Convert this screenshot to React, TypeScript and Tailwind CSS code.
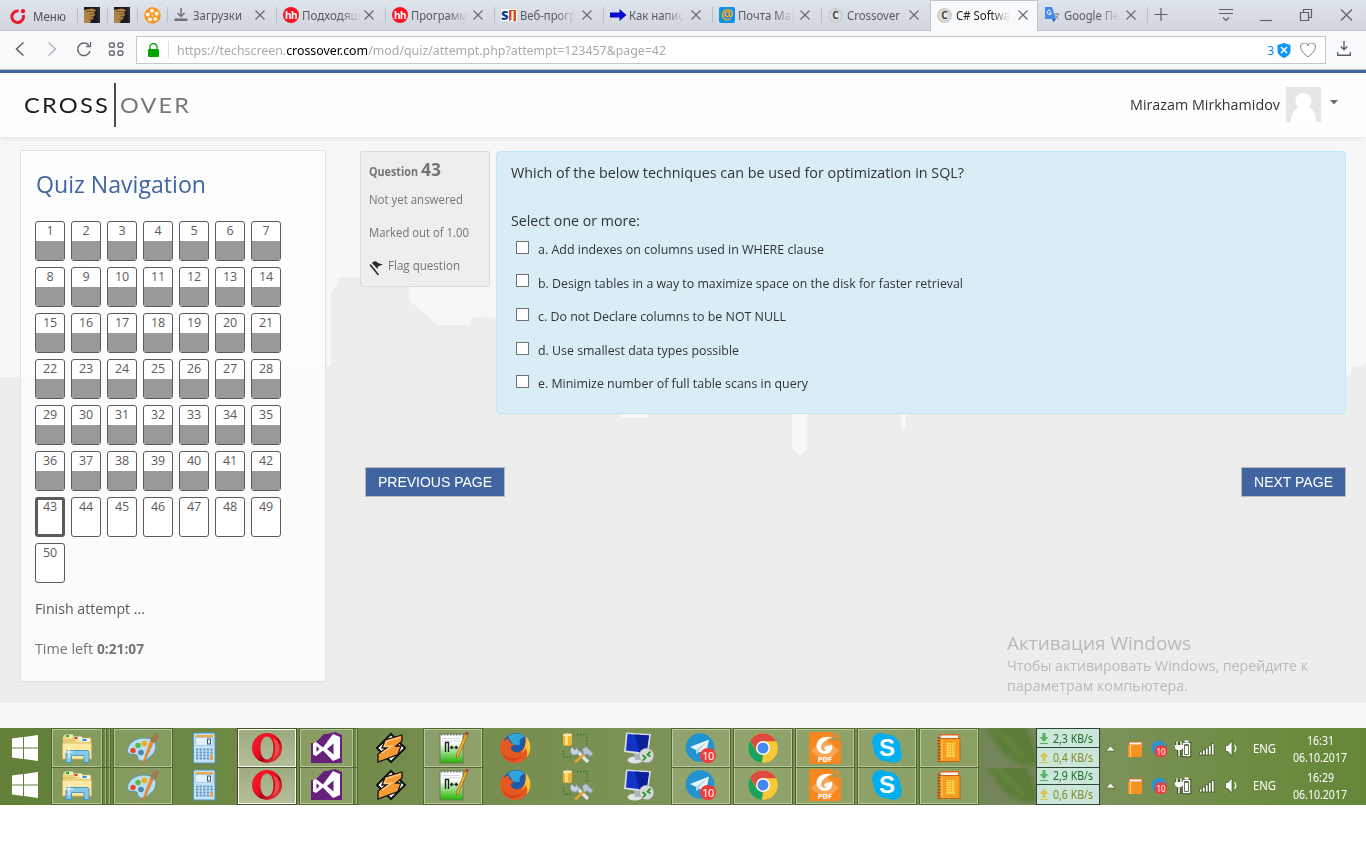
import { useLayoutEffect, useRef } from 'react';
import type { ReactNode } from 'react';

/* Text condensed or widened to fill the width given by its class. */
function Fit({ children, className = '' }: { children: ReactNode; className?: string }) {
  const outer = useRef<HTMLSpanElement>(null);
  const inner = useRef<HTMLSpanElement>(null);
  useLayoutEffect(() => {
    const o = outer.current;
    const i = inner.current;
    if (!o || !i) return;
    i.style.transform = 'none';
    const ratio = o.getBoundingClientRect().width / i.getBoundingClientRect().width;
    i.style.transform = `scaleX(${ratio})`;
  });
  return (
    <span ref={outer} className={`inline-block shrink-0 whitespace-nowrap text-left align-top ${className}`}>
      <span ref={inner} className="inline-block origin-left align-top">{children}</span>
    </span>
  );
}

/* ---------- browser chrome ---------- */

const CloseX = () => (
  <svg width="10" height="10" viewBox="0 0 10 10" className="shrink-0">
    <path d="M.5 .5 9.5 9.5M9.5 .5 .5 9.5" stroke="#63666b" strokeWidth="1.1" />
  </svg>
);

const HeadTile = () => (
  <svg width="16" height="16" viewBox="0 0 16 16">
    <rect width="16" height="16" fill="#1b1a1e" />
    <path d="M0 3 8 1.500 12 3 10 6l1.500 1.500L9 10l.5 2L7 13l-1 3H0z" fill="#b08347" />
    <path d="M2 4.500h9M5 7h6M6 9.500h4M5 12h4" stroke="#6f4b25" strokeWidth=".8" />
    <path d="M13 0h3v16h-2z" fill="#2b2a30" />
  </svg>
);

const Reel = () => (
  <svg width="17" height="17" viewBox="0 0 17 17">
    <circle cx="8.500" cy="8.500" r="8.200" fill="#f7931e" />
    <g fill="#fff3e0">
      <circle cx="8" cy="3.800" r="2.100" />
      <circle cx="3.900" cy="7.500" r="2.100" />
      <circle cx="12.700" cy="6.600" r="2.100" />
      <circle cx="6" cy="12.500" r="2.100" />
      <circle cx="11.300" cy="12" r="2.100" />
      <circle cx="8.500" cy="8.500" r=".9" />
    </g>
  </svg>
);

const Hh = () => (
  <span className="flex h-4 w-4 items-center justify-center rounded-full bg-[#f9141e] font-['Open_Sans',sans-serif] text-[10px] leading-none font-bold tracking-[-0.5px] text-white">
    hh
  </span>
);

const DownloadTray = () => (
  <svg width="14" height="14" viewBox="0 0 14 14">
    <path d="M7 0v8M3.500 5 7 8.500 10.500 5" fill="none" stroke="#6f7277" strokeWidth="1.500" />
    <rect x=".5" y="10.500" width="13" height="2.500" rx=".6" fill="#6f7277" />
  </svg>
);

const Sj = () => (
  <span className="flex h-[12px] w-4 items-center bg-white font-['Open_Sans',sans-serif] text-[13px] leading-none font-extrabold">
    <span className="w-2 text-[#123f8c]">S</span>
    <span className="flex h-[11px] w-[7px] items-center justify-center bg-[#e5481b] text-[10px] text-white">J</span>
  </span>
);

const BlueArrow = () => (
  <svg width="17" height="12" viewBox="0 0 17 12">
    <path d="M0 3.500h9.500V0L16.500 6 9.500 12V8.500H0z" fill="#0a0ad0" />
  </svg>
);

const MailAt = () => (
  <span className="flex h-4 w-4 items-center justify-center rounded-[2px] bg-[#0a93e8] pb-[2px] font-['Open_Sans',sans-serif] text-[14px] leading-none font-bold text-[#f5a623]">
    @
  </span>
);

const CBall = () => (
  <span className="flex h-[15px] w-[15px] items-center justify-center rounded-full bg-radial from-[#f4f4f4] to-[#b9b9b9] font-['Open_Sans',sans-serif] text-[10px] leading-none font-bold text-[#3c3c3c]">
    C
  </span>
);

const Translate = () => (
  <svg width="16" height="16" viewBox="0 0 16 16" className="-ml-px">
    <rect x="7" y="4" width="9" height="11" fill="#dcdee2" />
    <path d="M1 0h7l4 12H2a1 1 0 0 1-1-1z" fill="#4a87ee" />
    <path d="M8 12h4l-2.500 3.500z" fill="#2f5fc4" />
    <path d="M7 4.300A2.100 2.100 0 1 0 7.300 6H5.300" fill="none" stroke="#fff" strokeWidth="1" />
    <path d="M10.500 7h5M13 6v1.500M14.500 7c-.5 2-1.500 3.500-3.500 5M11.500 8.500c.8 1.800 2 3 3.500 4" fill="none" stroke="#7a8088" strokeWidth=".9" />
  </svg>
);

type TabInfo = { icon: ReactNode; label: string; width: string; fade?: boolean; active?: boolean };

const tabs: TabInfo[] = [
  { icon: <DownloadTray />, label: 'Загрузки', width: 'w-[49px]' },
  { icon: <Hh />, label: 'Подходящ', width: 'w-[59px]', fade: true },
  { icon: <Hh />, label: 'Программ', width: 'w-[57px]', fade: true },
  { icon: <Sj />, label: 'Веб-прогр', width: 'w-[56px]', fade: true },
  { icon: <BlueArrow />, label: 'Как напис', width: 'w-[55px]', fade: true },
  { icon: <MailAt />, label: 'Почта Mai', width: 'w-[56px]', fade: true },
  { icon: <CBall />, label: 'Crossover', width: 'w-[53px]' },
  { icon: <CBall />, label: 'C# Softwa', width: 'w-[54px]', fade: true, active: true },
  { icon: <Translate />, label: 'Google Пе', width: 'w-[55px]', fade: true },
];

function Tab({ t, quiet }: { t: TabInfo; quiet: boolean }) {
  return (
    <div
      className={`relative flex shrink-0 items-center ${
        t.active
          ? 'h-[31px] w-[108px] self-start border-x border-t border-[#c2c5ca] bg-[#f8f9fb] pb-[2px] pl-[6px] text-[#222]'
          : 'h-[30px] w-[109px] pl-[7px] text-[#57595d]'
      }`}
    >
      {!t.active && !quiet && <span className="absolute top-[7px] left-0 h-4 w-px bg-[#bcc0c6]" />}
      <span className="flex w-[18px] shrink-0 items-center justify-start">{t.icon}</span>
      <span className="w-[63px] shrink-0 overflow-hidden pt-px pl-[1px] text-[12px] leading-4">
        <Fit className={`${t.width} ${t.fade ? '[mask-image:linear-gradient(90deg,#000_65%,transparent)]' : ''}`}>{t.label}</Fit>
      </span>
      <CloseX />
    </div>
  );
}

function TabBar() {
  return (
    <div className="flex h-[31px] items-start border-b border-[#c2c5ca] bg-linear-to-b from-[#dfe5ed] to-[#d1d6de]">
      <div className="flex h-[31px] w-[77px] shrink-0 items-center pt-px pl-[10px]">
        <svg width="16" height="17" viewBox="0 0 16 17">
          <path d="M8.500 3A5.800 5.800 0 1 0 13.200 7" fill="none" stroke="#e81c2f" strokeWidth="3" />
          <circle cx="13" cy="3.200" r="2.100" fill="#f0142a" />
        </svg>
        <Fit className="ml-[7px] w-[33px] text-[13px] leading-4 text-[#4b4f55]">Меню</Fit>
      </div>
      {[<HeadTile />, <HeadTile />, <Reel />].map((icon, i) => (
        <div key={i} className="relative flex h-[30px] w-[30px] shrink-0 items-center justify-center">
          <span className="absolute top-[7px] left-0 h-4 w-px bg-[#bcc0c6]" />
          {icon}
        </div>
      ))}
      {tabs.map((t, i) => (
        <Tab key={i} t={t} quiet={i === 8} />
      ))}
      <div className="relative flex h-[30px] flex-1 items-center">
        <span className="absolute top-[7px] left-0 h-4 w-px bg-[#bcc0c6]" />
        <svg width="219" height="30" viewBox="1 0 219 30" fill="none" stroke="#5d6065" strokeWidth="1.200" className="shrink-0">
          <path d="M8.500 14.500h13M15 8v13" />
          <path d="M73 9.500h14M73 13.500h14M77 17.500l3 3 3-3" />
          <path d="M114 20.500h12" />
          <path d="M157.500 12.500v-3h8v8h-3M154.500 12.500h8v8h-8z" />
          <path d="M195 9.500l11 11M206 9.500l-11 11" />
        </svg>
      </div>
    </div>
  );
}

function AddressBar() {
  return (
    <div className="flex h-[39px] items-center border-b border-[#c6c8cb] bg-[#f8f9fb]">
      <svg width="136" height="38" viewBox="0 0 136 38" fill="none" className="shrink-0">
        <path d="M23.500 11.500 16.500 18l7 6.500" stroke="#5e6063" strokeWidth="1.500" />
        <path d="M48.500 11.500l7 6.500-7 6.500" stroke="#b4b6b9" strokeWidth="1.500" />
        <path d="M89 14.500A6.300 6.300 0 1 0 90 20" stroke="#67696c" strokeWidth="1.500" />
        <path d="M90.500 11v4.500H86" stroke="#67696c" strokeWidth="1.300" />
        <g stroke="#67696c" strokeWidth="1.400">
          <rect x="109.500" y="12" width="4.800" height="4.300" rx="1.200" />
          <rect x="118" y="12" width="4.800" height="4.300" rx="1.200" />
          <rect x="109.500" y="20" width="4.800" height="4.300" rx="1.200" />
          <rect x="118" y="20" width="4.800" height="4.300" rx="1.200" />
        </g>
      </svg>
      <div className="flex h-[28px] w-[1190px] shrink-0 items-center border border-[#c4c7cb] bg-white">
        <svg width="11" height="14" viewBox="0 0 11 14" className="ml-[11px] shrink-0">
          <path d="M2 7V4a3.500 3.500 0 0 1 7 0v3" fill="none" stroke="#00a200" strokeWidth="1.300" />
          <rect y="6" width="11" height="8" rx="1" fill="#00a200" />
        </svg>
        <span className="ml-[9px] h-[18px] w-px bg-[#dedfe1]" />
        <Fit className="mt-px ml-[8px] w-[489px] text-[12.500px] leading-5 text-[#a9a9a9]">
          https://techscreen.<span className="text-black">crossover.com</span>/mod/quiz/attempt.php?attempt=123457&amp;page=42
        </Fit>
        <div className="ml-auto flex items-center pr-[9px]">
          <span className="pt-px text-[12px] leading-4 text-[#0b8cf0]">3</span>
          <svg width="14" height="15" viewBox="0 0 14 15" className="ml-[3px]">
            <path d="M7 0l6.500 2v6c0 3-3 5.500-6.500 7C3.500 13.500 .5 11 .5 8V2z" fill="#0f97f7" />
            <path d="M4 4l6 6M10 4l-6 6" stroke="#fff" strokeWidth="1.600" />
          </svg>
          <svg width="16" height="15" viewBox="0 0 16 15" className="ml-[9px]">
            <path d="M8 14C3.500 10 .7 7.500 .7 4.500A3.700 3.700 0 0 1 8 3a3.700 3.700 0 0 1 7.300 1.500C15.300 7.500 12.500 10 8 14z" fill="none" stroke="#77797c" strokeWidth="1" />
          </svg>
        </div>
      </div>
      <svg width="14" height="16" viewBox="0 0 14 16" fill="none" stroke="#5d6065" strokeWidth="1.400" className="mb-[2px] ml-[11px]">
        <path d="M7 0v8.500M3.800 5.500 7 8.700l3.200-3.200M.7 11v3.300h12.600V11" />
      </svg>
    </div>
  );
}

/* ---------- site ---------- */

function SiteHeader() {
  return (
    <header className="relative z-10 flex h-[67px] items-center border-t-[3px] border-[#4065a0] bg-[#fefefe] shadow-[0_1px_6px_rgba(0,0,0,0.1)]">
      <div className="flex items-center pl-[24px] font-['Lato',sans-serif] text-[22px] leading-none">
        <Fit className="w-[86px] tracking-[2px] text-[#1e1e20]">CROSS</Fit>
        <span className="ml-[4px] h-[44px] w-[2px] bg-[#4c4c4e]" />
        <Fit className="ml-[4px] w-[71px] tracking-[2px] text-[#77787a]">OVER</Fit>
      </div>
      <div className="ml-auto flex items-center pr-[28px] pb-[2px]">
        <Fit className="w-[150px] text-[15px] leading-5 text-[#333]">Mirazam Mirkhamidov</Fit>
        <svg width="35" height="35" viewBox="0 0 35 35" className="ml-[6px]">
          <rect width="35" height="35" fill="#e6e6e6" />
          <circle cx="17.500" cy="14" r="8" fill="#fff" />
          <path d="M4.500 35c.8-9 5-14 9-15h8c4 1 8.200 6 9 15z" fill="#fff" />
        </svg>
        <svg width="8" height="5" viewBox="0 0 8 5" className="mb-[3px] ml-[9px]">
          <path d="M0 0h8L4 4.500z" fill="#6c6c6c" />
        </svg>
      </div>
    </header>
  );
}

const WorldShape = () => (
  <svg width="1366" height="566" viewBox="0 137 1366 566" className="absolute inset-0">
    <path
      fill="#ededed"
      d="M0 377H45V290L82 258 105 290V366H331V294L340 277 408 276 409 300 437 325H470L472 316.500 497 318V400H1346V376L1350 375 1353 367 1363 365.500 1366 361V703H0z"
    />
    <path fill="#f7f7f7" d="M621 400h27v18h-27zM792 400h15.500v49l-7.500 7-8-7zM901 400h5v29h-5z" />
  </svg>
);

const questions = Array.from({ length: 50 }, (_, i) => i + 1);

function QuizNav() {
  return (
    <aside className="h-[532px] w-[306px] shrink-0 border border-[#e0e0e0] bg-white/80 pl-[14px]">
      <h2 className="flex h-[51px] pt-[17px] text-[#4065a0]">
        <Fit className="ml-[1px] w-[170px] text-[24px] leading-[32px]">Quiz Navigation</Fit>
      </h2>
      <div className="mt-[19px] grid w-[246px] grid-cols-7 gap-[6px]">
        {questions.map((n) => (
          <div
            key={n}
            className={`flex h-[40px] w-[30px] flex-col overflow-hidden rounded-[3px] border-[#5b5b5b] bg-white text-center text-[12.500px] tracking-[-0.2px] text-[#5b5b5b] ${
              n === 43 ? 'border-3 leading-[14px]' : 'border leading-[18px]'
            }`}
          >
            <span className={n === 43 ? 'h-[17px]' : 'h-[19px]'}>{n}</span>
            {n < 43 && <span className="flex-1 bg-[#999]" />}
          </div>
        ))}
      </div>
      <div className="mt-[16px] flex text-[14.500px] leading-[20px] text-[#5b5b5b]">
        <Fit className="w-[110px]">Finish attempt ...</Fit>
      </div>
      <div className="mt-[20px] flex text-[14.500px] leading-[20px] text-[#757575]">
        <Fit className="w-[58px]">Time left</Fit>
        <Fit className="ml-[4px] w-[47px] font-bold">0:21:07</Fit>
      </div>
    </aside>
  );
}

function QuestionInfo() {
  return (
    <div className="flex h-[136px] w-[130px] shrink-0 flex-col rounded-[2px] border border-[#dadada] bg-[#eee] pl-[8px] text-[13.500px] text-[#757575]">
      <div className="flex h-[27px] items-baseline pt-[6px] font-bold">
        <Fit className="w-[49px] text-[12px] leading-[20px]">Question</Fit>
        <Fit className="ml-[3px] w-[20px] text-[18px] leading-[22px]">43</Fit>
      </div>
      <Fit className="mt-[10px] w-[94px] leading-[20px]">Not yet answered</Fit>
      <Fit className="mt-[13px] w-[100px] leading-[20px]">Marked out of 1.00</Fit>
      <div className="mt-[13px] flex h-[20px] items-start">
        <svg width="15" height="16" viewBox="0 0 15 16" className="mt-[5px] shrink-0">
          <path d="M1 4.500 9.500 15" stroke="#2b2b2b" strokeWidth="1.600" />
          <path d="M3 3C5 .5 7 .5 9.500 3.200L14 4.500 9 6.500 8.500 9z" fill="#2b2b2b" />
        </svg>
        <Fit className="ml-[4px] w-[72px] leading-[20px]">Flag question</Fit>
      </div>
    </div>
  );
}

const answers = [
  { text: 'a. Add indexes on columns used in WHERE clause', width: 'w-[286px]', h: 'h-[33px]', drop: 'mt-[1px]' },
  { text: 'b. Design tables in a way to maximize space on the disk for faster retrieval', width: 'w-[425px]', h: 'h-[34px]', drop: 'mt-[2px]' },
  { text: 'c. Do not Declare columns to be NOT NULL', width: 'w-[248px]', h: 'h-[34px]', drop: 'mt-[1px]' },
  { text: 'd. Use smallest data types possible', width: 'w-[201px]', h: 'h-[33px]', drop: 'mt-[1px]' },
  { text: 'e. Minimize number of full table scans in query', width: 'w-[270px]', h: 'h-[33px]', drop: 'mt-[1px]' },
];

function Question() {
  return (
    <div className="flex h-[263px] w-[850px] shrink-0 flex-col rounded-[4px] border border-[#bce8f1] bg-[#d9edf7] pl-[14px] text-[#333]">
      <Fit className="mt-[9px] w-[453px] text-[15px] leading-[22px]">
        Which of the below techniques can be used for optimization in SQL?
      </Fit>
      <Fit className="mt-[26px] w-[129px] text-[15px] leading-[22px]">Select one or more:</Fit>
      <div className="mt-[7px] flex flex-col pl-[5px]">
        {answers.map((a) => (
          <label key={a.text} className={`flex items-start ${a.h}`}>
            <span className="mt-[3px] h-[13px] w-[13px] shrink-0 border border-[#707070] bg-white" />
            <Fit className={`ml-[9px] text-[13.500px] leading-[20px] ${a.width} ${a.drop}`}>{a.text}</Fit>
          </label>
        ))}
      </div>
    </div>
  );
}

function PageButton({ label, className, text }: { label: string; className: string; text: string }) {
  return (
    <button
      className={`flex h-[30px] items-center justify-center border border-[#b7bbc1] bg-[#4065a0] font-['Liberation_Sans',Arial,sans-serif] text-[14.500px] leading-none text-white ${className}`}
    >
      <Fit className={text}>{label}</Fit>
    </button>
  );
}

function Site() {
  return (
    <main className="relative h-[566px] bg-[#f7f7f7]">
      <WorldShape />
      <div className="relative flex pt-[13px] pl-[20px]">
        <QuizNav />
        <div className="ml-[34px] flex flex-col pt-[1px]">
          <div className="flex gap-[6px]">
            <QuestionInfo />
            <Question />
          </div>
          <div className="mt-[53px] flex justify-between pl-[5px]">
            <PageButton label="PREVIOUS PAGE" className="w-[140px]" text="w-[114px]" />
            <PageButton label="NEXT PAGE" className="w-[105px]" text="w-[79px]" />
          </div>
        </div>
      </div>
      <div className="absolute top-[493px] left-[1007px] flex flex-col text-[#b9b9b9]">
        <Fit className="w-[184px] text-[19px] leading-[26px]">Активация Windows</Fit>
        <Fit className="w-[301px] text-[14.500px] leading-[20px]">Чтобы активировать Windows, перейдите к</Fit>
        <Fit className="w-[181px] text-[14.500px] leading-[20px]">параметрам компьютера.</Fit>
      </div>
    </main>
  );
}

/* ---------- taskbar ---------- */

const Ico = ({ children }: { children: ReactNode }) => (
  <svg width="32" height="32" viewBox="0 0 32 32" className="shrink-0">{children}</svg>
);

const Folder = () => (
  <Ico>
    <path d="M2 5q0-2 2-2h8l1 3h15q2 0 2 2v17H2z" fill="#efd27a" />
    <rect x="4" y="2.500" width="8" height="3" fill="#f8edc2" />
    <rect x="5" y="3" width="3" height="2" fill="#13b12a" />
    <path d="M3 9h11l2-3h14v20H2z" fill="#f5df90" stroke="#d3aa48" strokeWidth=".7" />
    <rect x="13" y="4.500" width="8" height="3" fill="#fbf5da" />
    <rect x="13.500" y="5" width="3" height="2" fill="#d03a24" />
    <rect x="20" y="6.500" width="9" height="3" fill="#fff" />
    <rect x="21.500" y="7" width="4" height="2" fill="#1f8be0" />
    <path d="M1.500 11h29v16h-29z" fill="#fae9a3" stroke="#d8b458" strokeWidth=".8" />
    <path d="M5 30.500V20.500q0-2 2-2h19q2 0 2 2v10h-5v-6q0-1-1-1H11.500q-1 0-1 1v6z" fill="#84c9e8" stroke="#4391bb" strokeWidth=".9" />
    <path d="M8 14v12M4 20h8" stroke="#fff" strokeWidth="1" />
  </Ico>
);

const Palette = () => (
  <Ico>
    <path d="M.5 18C1.500 10 11 4.500 21 6.500c7 1 9 6 7 12-1 4-3 4-6 7-3 4-9 5-11 1-1-3 0-4-4-4s-7-1-6.500-4.500z" fill="#b9dff0" stroke="#4e93b8" strokeWidth=".9" />
    <circle cx="6" cy="18.500" r="2.700" fill="#e5482e" />
    <circle cx="11" cy="13.500" r="2.700" fill="#58b747" />
    <circle cx="17.500" cy="11.500" r="2.900" fill="#f4ae22" />
    <circle cx="14" cy="20.500" r="2.800" fill="#4a86a8" />
    <path d="M26.500 10 17 31.500l-1.500-.5L23.500 9z" fill="#ec8c2f" stroke="#b96416" strokeWidth=".4" />
    <path d="M23.500 9.500c-.5-4 3-8 8.500-8 0 4-1 7-4.500 9z" fill="#a07b52" />
  </Ico>
);

const Calc = () => (
  <Ico>
    <rect x="4.500" y="1" width="21.500" height="30" rx="1.500" fill="#c6e2f6" stroke="#4c96c8" strokeWidth="1" />
    <rect x="6.500" y="3" width="17.500" height="2.500" fill="#f0a93c" />
    <rect x="6.500" y="5.500" width="17.500" height="8" fill="#e3f1fb" stroke="#88b7da" strokeWidth=".6" />
    <rect x="18.500" y="7" width="3" height="5" fill="none" stroke="#3e5568" strokeWidth="1" />
    <g fill="#5d97c4">
      {[16.5, 19.5, 22.5, 25.5].map((y) =>
        [7, 10.6, 14.2, 17.8, 21.4].map((x) => <rect key={`${x}-${y}`} x={x} y={y} width="2.300" height="2" />)
      )}
    </g>
    <rect x="21.400" y="23" width="2.300" height="5" fill="#f0a030" />
  </Ico>
);

const OperaO = () => (
  <Ico>
    <defs>
      <linearGradient id="operaRed" x1="0" y1="0" x2="1" y2="1">
        <stop offset="0" stopColor="#ff1b2d" />
        <stop offset=".45" stopColor="#e80f22" />
        <stop offset=".6" stopColor="#b00018" />
        <stop offset="1" stopColor="#ff5a4e" />
      </linearGradient>
    </defs>
    <path fillRule="evenodd" fill="url(#operaRed)" d="M16 1a15 15 0 1 0 0 30 15 15 0 0 0 0-30zm0 3.500c4 0 6.500 5 6.500 11.500S20 27.500 16 27.500 9.500 22.500 9.500 16 12 4.500 16 4.500z" />
    <path d="M22 6Q29 9 28.500 16T22 26.500Q24.500 21 24 16T22 6z" fill="#ff5a50" opacity=".8" />
  </Ico>
);

const VStudio = () => (
  <Ico>
    <path d="M0 11h4L13 2h3l8-2 7 3v28H0z" fill="#68217a" />
    <path fillRule="evenodd" d="M2 11.500 5 10l7 5.500L22 2l7 3v21l-7 3-10-10.500L5 24l-3-1.500zM5.500 14v6l3-3zM22.500 11.500 16 17l6.500 5.500z" fill="#fff" />
  </Ico>
);

const Winamp = () => (
  <Ico>
    <path d="M16 2 30 16 16 30 2 16z" fill="#fff" stroke="#111" strokeWidth="2" />
    <path d="M27 3 10 8 7 16h4.500L3 22v8L23 22.500 26 14h-5L27 9z" fill="#f59a35" stroke="#111" strokeWidth="1.300" />
    <path d="M25.500 5 11.500 9.500 9.500 14.500 17 14 7 21" fill="none" stroke="#ffd093" strokeWidth="1.200" />
  </Ico>
);

const Npp = () => (
  <Ico>
    <defs>
      <linearGradient id="nppGreen" x1="0" y1="0" x2="0" y2="1">
        <stop offset=".3" stopColor="#fff" />
        <stop offset="1" stopColor="#22b500" />
      </linearGradient>
    </defs>
    <rect x="3" y="2" width="23" height="29" fill="url(#nppGreen)" stroke="#6a7763" strokeWidth="1" />
    <path d="M4 2.500h21" stroke="#777" strokeWidth="2" strokeDasharray="1.500 1.500" />
    <path d="M5 6.500h18M5 9h18" stroke="#bfcedd" strokeWidth=".8" />
    <path d="M8.500 20V10.500h3v9.500M13 15.500h3.500M14.700 13.800v3.500M17.500 15.500h3.500M19.200 13.800v3.500" fill="none" stroke="#222" strokeWidth="1.400" />
    <path d="M30.500 3 21.500 25l-2 1.500V23L28 2z" fill="#f0b02e" stroke="#946514" strokeWidth=".7" />
    <path d="M28 2 30.500 3.200 32 .5 29 0z" fill="#b93a3a" />
  </Ico>
);

const Firefox = () => (
  <Ico>
    <circle cx="17" cy="14.500" r="13.500" fill="#1e5aa5" />
    <path d="M9 4Q19-1 26 4.500q-7 2-5 8-6 2-9-3z" fill="#2fa5dc" />
    <path d="M26.500 4.500C32 10 32 20 27.500 25.500 25 29 21 31 16.500 31 9 31 3 26 1.500 19 .5 13.500 2 9 4.500 6l.8 3.200C6.500 7.500 8.500 6.500 10.500 6c-1 2-.2 4 1.300 5l3.200 1c0 1.800-2.500 2-3.500 3.300C13 21 20 22.500 24 17c2.500-3.500 3-8 2.500-12.500z" fill="#e5581f" />
    <path d="M26.500 4c6 6 6.500 14.500 1.500 21-.5 0 1.500-6-1.500-9-1 3-2.500 4-4 5 4-5 5-11 4-17z" fill="#f8c632" />
    <path d="M2 19c5 8 15 9 22 5-4 6-17 9-22-5z" fill="#c83a16" opacity=".6" />
  </Ico>
);

const DbTools = () => (
  <Ico>
    <rect x="2" y="2" width="9" height="12" rx="2" fill="#f0b332" />
    <rect x="4" y="3" width="3" height="10" fill="#fbe08a" />
    <ellipse cx="6.500" cy="2.800" rx="4.500" ry="1.600" fill="#fbe7a8" />
    <path d="M16 2.500h10v10M2.500 18.500v6.500h9" fill="none" stroke="#237a20" strokeWidth="1.300" strokeDasharray="1.300 1.800" />
    <path d="M27 30 16 19" stroke="#dde6ee" strokeWidth="3.200" />
    <path d="M11 15a4.500 4.500 0 1 0 7 5l-2.500-5-1.500 3z" fill="#c5d3df" stroke="#73879a" strokeWidth=".6" />
    <path d="M14 30.500 25 20.500" stroke="#e6a22c" strokeWidth="2.600" />
    <path d="M21 17l4-2.500 3 3 4 4-2 3-4-2.500-3 1.500z" fill="#b4c4d5" stroke="#71869c" strokeWidth=".6" />
  </Ico>
);

const Rdp = () => (
  <Ico>
    <ellipse cx="12" cy="28" rx="7.500" ry="3.500" fill="#dfe3e6" />
    <path d="M11 22h6l1 6h-6z" fill="#aeb7bd" />
    <path d="M3 .5 28 2 25 23.500 1 20z" fill="#d7dde4" />
    <path d="M4.500 2 26 3.500 23.500 21 3 18.500z" fill="#1333c8" />
    <path d="M12 2.600 26 3.500 23.500 21 16 20.200z" fill="#0a1f9a" />
    <circle cx="23.500" cy="23.500" r="7.300" fill="#d6dad6" stroke="#949b94" strokeWidth=".6" />
    <path d="M19.500 23l3 2.500-2.500 3M27.500 19.500 24.500 22.500l3 2" fill="none" stroke="#2a9438" strokeWidth="1.800" />
  </Ico>
);

const Telegram = () => (
  <span className="relative">
    <Ico>
      <circle cx="15" cy="15.500" r="14.300" fill="#2293d1" />
      <path d="M5 15 24 7.500 20.500 24 14.500 19.500 11.500 22 11 18z" fill="#e9f4fb" />
      <path d="M11 18 22 9.500 13.500 19 11.500 22z" fill="#a9cfe4" />
    </Ico>
    <span className="absolute top-[16px] left-[15px] flex h-[15px] w-[16px] items-center justify-center rounded-full bg-[#ee3b3b] text-[11px] leading-none tracking-[-0.5px] text-white">
      10
    </span>
  </span>
);

const Chrome = () => (
  <Ico>
    <circle cx="16" cy="16" r="14.800" fill="#f9c935" />
    <path d="M3.200 8.600A14.800 14.800 0 0 1 28.800 8.600L28.900 9.300H16L9.800 19.500z" fill="#dd4b3e" />
    <path d="M3.200 8.600 9.600 19.800 16 23l-1.200 7.800A14.800 14.800 0 0 1 3.200 8.600z" fill="#1ca160" />
    <circle cx="16" cy="16" r="7" fill="#fff" />
    <circle cx="16" cy="16" r="5.500" fill="#4588f0" />
  </Ico>
);

const Foxit = () => (
  <span className="relative">
    <Ico>
      <path d="M0 0h24v8h8v24H0z" fill="#f6871f" />
      <path d="M26 0l6 6h-6z" fill="#f6871f" />
      <path d="M2 19 16 6l14 13-14 12z" fill="#fba451" />
      <path d="M23.500 5.500C14 3 8 7.500 7.500 13.500c0 6 5.500 9.500 11 8 4-1.200 5.500-5 4.500-9-2 1.500-4 1-6 1.500-2.500.8-2.500 4 .5 4-2 2-5.500 1-5.500-2.500 0-4 4.500-8 11.500-10z" fill="#fff" />
    </Ico>
    <span className="absolute top-[22px] left-0 w-8 text-center text-[7.500px] leading-[10px] font-bold text-white">PDF</span>
  </span>
);

const Skype = () => (
  <span className="relative">
    <Ico>
      <circle cx="9.500" cy="9.500" r="8.500" fill="#00aff0" />
      <circle cx="22.500" cy="22.500" r="8.500" fill="#00aff0" />
      <circle cx="16" cy="16" r="13.500" fill="#00aff0" />
    </Ico>
    <span className="absolute top-0 left-0 w-8 text-center font-['Liberation_Sans',Arial,sans-serif] text-[24px] leading-[32px] font-bold text-white">
      S
    </span>
  </span>
);

const Notebook = () => (
  <Ico>
    <path d="M7 2h19v5H6z" fill="#e8681b" />
    <path d="M8 3.500h17v2.500H7z" fill="#f3f8fc" />
    <path d="M6 6.500h21v23H6z" fill="#f89e1e" stroke="#ba5c0d" strokeWidth=".8" />
    <path d="M6 5v25" stroke="#ad4a13" strokeWidth="3" strokeDasharray="1.500 1.500" />
    <path d="M9 8v20" stroke="#ffd06a" strokeWidth="1" />
    <rect x="13" y="11" width="9" height="14" fill="#ffcf4a" />
    <path d="M13.500 12v12M16 12v12M18.500 12v12M21 12v12" stroke="#e58a17" strokeWidth="1" strokeDasharray="1 1.400" />
  </Ico>
);

type Task = { icon: ReactNode; kind: 'plain' | 'open' | 'active' | 'stack3' | 'stack2' };

const tasks: Task[] = [
  { icon: <Folder />, kind: 'stack3' },
  { icon: <Palette />, kind: 'open' },
  { icon: <Calc />, kind: 'plain' },
  { icon: <OperaO />, kind: 'active' },
  { icon: <VStudio />, kind: 'stack2' },
  { icon: <Winamp />, kind: 'plain' },
  { icon: <Npp />, kind: 'open' },
  { icon: <Firefox />, kind: 'plain' },
  { icon: <DbTools />, kind: 'plain' },
  { icon: <Rdp />, kind: 'plain' },
  { icon: <Telegram />, kind: 'open' },
  { icon: <Chrome />, kind: 'open' },
  { icon: <Foxit />, kind: 'open' },
  { icon: <Skype />, kind: 'open' },
  { icon: <Notebook />, kind: 'open' },
];

const face =
  'flex h-[40px] items-center justify-center border border-[#50652f] shadow-[inset_0_0_0_1px_rgba(214,226,188,0.6)] bg-[#c2cda4]/30';
const edge = 'h-[40px] w-[4px] border-y border-r border-[#50652f] shadow-[inset_-1px_0_0_rgba(214,226,188,0.5)]';

function TaskButton({ t }: { t: Task }) {
  if (t.kind === 'plain') {
    return <div className="flex h-[40px] w-[62px] shrink-0 items-center justify-center pr-[2px]">{t.icon}</div>;
  }
  if (t.kind === 'active') {
    return (
      <div className="w-[62px] shrink-0">
        <div className="flex h-[40px] w-[60px] items-center justify-center border border-[#3f5222] bg-linear-to-b from-[#9caa80] to-[#b4bf99] shadow-[inset_0_0_0_1px_#fbfdf5]">
          {t.icon}
        </div>
      </div>
    );
  }
  if (t.kind === 'open') {
    return (
      <div className="w-[62px] shrink-0">
        <div className={`${face} w-[60px]`}>{t.icon}</div>
      </div>
    );
  }
  return (
    <div className="flex w-[62px] shrink-0">
      <div className={`${face} ${t.kind === 'stack3' ? 'w-[52px]' : 'w-[55px]'}`}>{t.icon}</div>
      <div className={edge} />
      {t.kind === 'stack3' && <div className={edge} />}
    </div>
  );
}

function Speed({ down, up }: { down: string; up: string }) {
  return (
    <div className="flex h-[40px] w-[64px] shrink-0 flex-col border border-[#2d4433] bg-[#cae7d9] text-[12px]">
      <div className="flex h-[19px] items-center border-b border-[#2d4433] pl-[2px] text-[#1f6b2b]">
        <svg width="10" height="11" viewBox="0 0 10 11"><path d="M3.500 0h3v4H9.500L5 9 .5 4h3zM1 10h8v1H1z" fill="#58b263" /></svg>
        <Fit className="mt-px ml-[4px] w-[40px] leading-[13px]">{down}</Fit>
      </div>
      <div className="flex h-[19px] items-center pl-[2px] text-[#8a8426]">
        <svg width="10" height="11" viewBox="0 0 10 11"><path d="M3.500 9h3V5H9.500L5 0 .5 5h3zM1 10h8v1H1z" fill="#d8c55a" /></svg>
        <Fit className="mt-px ml-[4px] w-[40px] leading-[14px]">{up}</Fit>
      </div>
    </div>
  );
}

function Tray() {
  return (
    <div className="relative h-[40px] w-[146px] shrink-0">
      <svg width="146" height="40" viewBox="1100 0 146 40">
        <path d="M1106 23 1110.500 18 1115 23z" fill="#f5f8ef" stroke="#4c6329" strokeWidth=".6" />
        <path d="M1129 14h13v3h-13z" fill="#fff" stroke="#e0661c" strokeWidth="1" />
        <path d="M1128 17h14v12h-14z" fill="#f79220" />
        <path d="M1130.500 17v12" stroke="#ffd273" strokeWidth="1.200" />
        <circle cx="1159" cy="20" r="7.500" fill="#2c93cf" />
        <rect x="1155" y="17.500" width="12" height="11.500" rx="4.500" fill="#ee3b3b" />
        <g fill="none" stroke="#35491c" strokeWidth="3.500">
          <path d="M1177 14v4M1181 14v4M1179 20v9" />
          <rect x="1183.500" y="15.500" width="6" height="12" />
        </g>
        <path d="M1175 17h8v3l-2 2h-4l-2-2zM1184.500 12.500h4v2h-4z" fill="#fff" />
        <g fill="none" stroke="#fff" strokeWidth="1.500">
          <path d="M1177 13.500v4M1181 13.500v4M1179 21v7.500" />
          <rect x="1183.500" y="15.500" width="6" height="12" />
        </g>
        <path d="M1185 18h3v8h-3z" fill="#fff" />
        <g fill="#fff" stroke="#3b5020" strokeWidth=".7">
          <path d="M1199.500 24h2.500v3h-2.500zM1202.500 22h2.500v5h-2.500zM1205.500 20h2.500v7h-2.500zM1208.500 17.500h2.500v9.500h-2.500zM1211.500 15.500h2.500V27h-2.500z" />
          <path d="M1225.500 17.500h2.500l4-4.500v15l-4-4.500h-2.500z" />
        </g>
        <path d="M1234.500 17q2.500 3.500 0 7" fill="none" stroke="#fff" strokeWidth="1.200" />
      </svg>
      <span className="absolute top-[18px] left-[55px] w-3 text-center text-[8px] leading-[11px] text-white">10</span>
    </div>
  );
}

function TaskStrip({ time, down, up }: { time: string; down: string; up: string }) {
  return (
    <div className="flex h-[40px] w-[1366px] shrink-0 items-center bg-linear-to-r from-[#66833b] via-[#7d9257] to-[#658739]">
      <div className="flex h-[40px] w-[51px] shrink-0 items-center bg-[#607d36]/50 pl-[11px]">
        <svg width="28" height="26" viewBox="0 0 28 26" fill="#fff">
          <path d="M1 3.500 12 2v10.500H1zM13 1.900 27 0v12.500H13zM1 13.500h11V24L1 22.500zM13 13.500h14V26l-14-1.900z" />
        </svg>
      </div>
      {tasks.map((t, i) => (
        <TaskButton key={i} t={t} />
      ))}
      <svg width="55" height="40" viewBox="0 0 55 40" className="shrink-0">
        <defs>
          <filter id="leafSoft"><feGaussianBlur stdDeviation="2.500" /></filter>
        </defs>
        <rect width="55" height="40" fill="#75855a" />
        <path d="M0-4H40C50 6 54 18 56 36 46 42 30 34 21 24 14 16 10 5 0-4z" fill="#5c7d38" filter="url(#leafSoft)" />
        <path d="M12 0q20 16 30 30" stroke="#6d8c41" strokeWidth="3" fill="none" filter="url(#leafSoft)" />
      </svg>
      <Speed down={down} up={up} />
      <div className="flex h-[40px] flex-1 items-center bg-linear-to-r from-[#7c915b] via-[#6f8d43] to-[#658739] text-white">
        <Tray />
        <Fit className="mt-[2px] ml-[7px] w-[23px] text-[12px] leading-4">ENG</Fit>
        <div className="mt-[2px] ml-[16px] flex w-[56px] flex-col items-center text-[12px] leading-[17px]">
          <Fit className="w-[27px]">{time}</Fit>
          <Fit className="w-[54px]">06.10.2017</Fit>
        </div>
      </div>
    </div>
  );
}

export default function App() {
  return (
    <div className="h-[844px] w-[1366px] overflow-hidden bg-white font-['Noto_Sans','Open_Sans',sans-serif]">
      <TabBar />
      <AddressBar />
      <div className="font-['Open_Sans','Noto_Sans',sans-serif]">
        <SiteHeader />
        <Site />
      </div>
      <div className="h-[25px] bg-[#f7f7f7]" />
      <TaskStrip time="16:31" down="2,3 KB/s" up="0,4 KB/s" />
      <div className="flex h-[37px] items-end overflow-hidden">
        <TaskStrip time="16:29" down="2,9 KB/s" up="0,6 KB/s" />
      </div>
    </div>
  );
}
